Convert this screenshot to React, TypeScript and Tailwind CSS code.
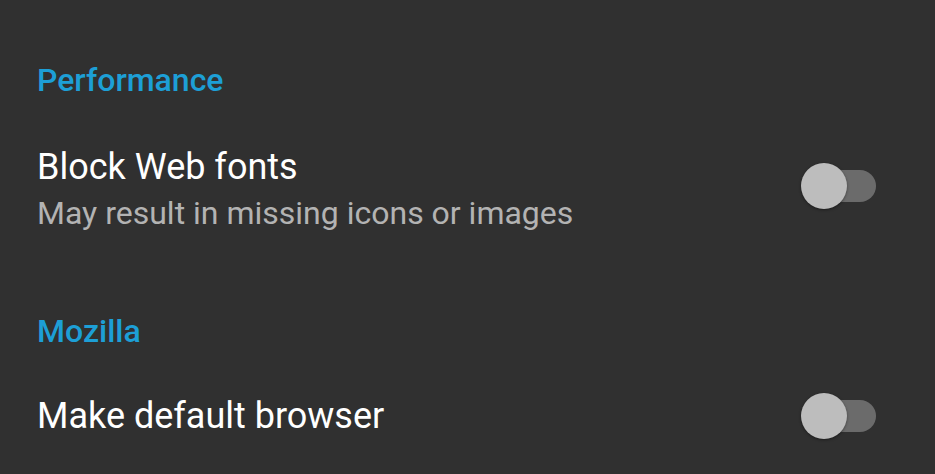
import React from 'react';

function Toggle() {
  return (
    <div className="relative h-[46px] w-[76px] shrink-0">
      <div className="absolute left-[3px] top-[7px] h-[32px] w-[72px] rounded-full bg-[#6b6b6b]" />
      <div className="absolute left-0 top-0 h-[46px] w-[46px] rounded-full bg-[#bdbdbd] shadow-[0_1px_3px_rgba(0,0,0,0.4)]" />
    </div>
  );
}

export default function App() {
  return (
    <div className="min-h-screen w-full bg-[#303030] pl-[37px] pr-[58px] font-['Roboto','Liberation_Sans',sans-serif]">
      {/* Performance */}
      <div className="pt-[60px] text-[32px] font-medium leading-[40px] text-[#1d9fd6]">Performance</div>
      <div className="mt-[47px] flex items-center justify-between">
        <div>
          <div className="text-[36px] leading-[40px] text-white">Block Web fonts</div>
          <div className="mt-[6px] text-[32px] leading-[40px] text-[#b3b3b3]">May result in missing icons or images</div>
        </div>
        <div className="-mt-[8px]">
          <Toggle />
        </div>
      </div>

      {/* Mozilla */}
      <div className="mt-[78px] text-[32px] font-medium leading-[40px] text-[#1d9fd6]">Mozilla</div>
      <div className="mt-[42px] flex items-center justify-between">
        <div className="text-[36px] leading-[40px] text-white">Make default browser</div>
        <Toggle />
      </div>
    </div>
  );
}
